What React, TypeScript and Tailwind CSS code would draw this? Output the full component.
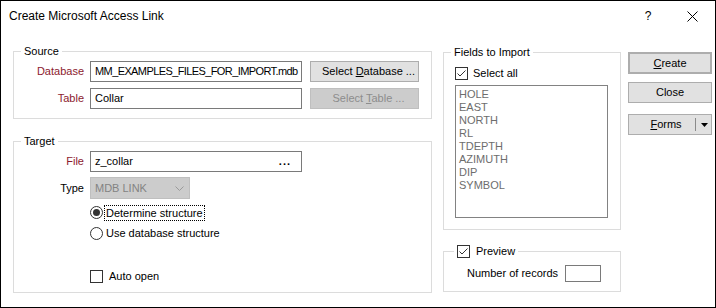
import type { ReactNode } from "react";

const LABEL = "w-[70px] text-right text-[#8c1a2e]";

function GroupBox({
  title,
  className = "",
  legendClass = "ml-[7px]",
  children,
}: {
  title: ReactNode;
  className?: string;
  legendClass?: string;
  children: ReactNode;
}) {
  return (
    <fieldset className={"border border-[#dcdcdc] min-w-0 " + className}>
      <legend className={"px-[3px] leading-[15px] " + legendClass}>{title}</legend>
      {children}
    </fieldset>
  );
}

function CheckBox({ checked }: { checked?: boolean }) {
  return (
    <span className="flex-none w-[13px] h-[13px] border border-[#333] bg-white flex items-center justify-center">
      {checked && (
        <svg width="11" height="11" viewBox="0 0 11 11">
          <path d="M1.5 5.5 L4 8 L9.5 2.5" fill="none" stroke="#333" strokeWidth="1" />
        </svg>
      )}
    </span>
  );
}

function Radio({ checked }: { checked?: boolean }) {
  return (
    <span className="flex-none w-[13px] h-[13px] rounded-full border border-[#333] bg-white flex items-center justify-center">
      {checked && <span className="w-[7px] h-[7px] rounded-full bg-[#333]" />}
    </span>
  );
}

function Button({ children, className = "" }: { children: ReactNode; className?: string }) {
  return (
    <div className={"flex items-center justify-center whitespace-nowrap bg-[#e1e1e1] border border-[#adadad] " + className}>
      {children}
    </div>
  );
}

const FIELDS = ["HOLE", "EAST", "NORTH", "RL", "TDEPTH", "AZIMUTH", "DIP", "SYMBOL"];

export default function App() {
  return (
    <div className="w-[716px] h-[308px] border border-black bg-white text-[11px] leading-[15px] text-black font-['Liberation_Sans',Arial,sans-serif] flex flex-col">
      {/* title bar */}
      <div className="h-[30px] flex items-center pl-[8px] text-[12px]">
        <span className="flex-1">Create Microsoft Access Link</span>
        <span className="w-[10px] text-center mr-[34px]">?</span>
        <svg width="11" height="11" viewBox="0 0 11 11" className="mr-[17px]">
          <path d="M0.5 0.5 L10.5 10.5 M10.5 0.5 L0.5 10.5" stroke="#000" strokeWidth="1" />
        </svg>
      </div>

      <div className="flex pl-[12px] pt-[13px]">
        {/* left column */}
        <div className="w-[419px] flex flex-col">
          <GroupBox title="Source">
            <div className="flex flex-col gap-[6px] pt-[2px] pb-[9px]">
              <div className="flex items-center">
                <span className={LABEL}>Database</span>
                <div className="ml-[6px] w-[212px] h-[21px] border border-[#7a7a7a] px-[4px] flex items-center overflow-hidden whitespace-nowrap tracking-[-0.6px]">
                  MM_EXAMPLES_FILES_FOR_IMPORT.mdb
                </div>
                <Button className="ml-[8px] w-[109px] h-[21px] pl-[8px]">
                  <span>
                    Select <u>D</u>atabase ...
                  </span>
                </Button>
              </div>
              <div className="flex items-center">
                <span className={LABEL}>Table</span>
                <div className="ml-[6px] w-[212px] h-[21px] border border-[#7a7a7a] px-[4px] flex items-center">
                  Collar
                </div>
                <div className="ml-[8px] w-[109px] h-[21px] pl-[8px] flex items-center justify-center whitespace-nowrap bg-[#cccccc] border border-[#bfbfbf] text-[#8d8d8d]">
                  <span>
                    Select <u>T</u>able ...
                  </span>
                </div>
              </div>
            </div>
          </GroupBox>

          <GroupBox title="Target" className="mt-[15px]">
            <div className="flex flex-col pt-[2px] pb-[5px]">
              <div className="flex items-center h-[21px]">
                <span className={LABEL}>File</span>
                <div className="ml-[6px] w-[212px] h-[21px] border border-[#7a7a7a] pl-[4px] pr-[10px] flex items-center justify-between">
                  <span>z_collar</span>
                  <span className="font-bold tracking-[1px]">...</span>
                </div>
              </div>
              <div className="flex items-center h-[22px] mt-[5px]">
                <span className="w-[70px] text-right">Type</span>
                <div className="ml-[6px] w-[100px] h-[22px] border border-[#bfbfbf] bg-[#cccccc] text-[#838383] pl-[4px] pr-[5px] flex items-center justify-between">
                  <span>MDB LINK</span>
                  <svg width="9" height="5" viewBox="0 0 9 5">
                    <path d="M0.5 0.5 L4.5 4.5 L8.5 0.5" fill="none" stroke="#9a9a9a" strokeWidth="1" />
                  </svg>
                </div>
              </div>
              <div className="flex items-center h-[21px] mt-[3px] pl-[76px]">
                <Radio checked />
                <span className="ml-[1px] border border-dotted border-black px-[1px] leading-[14px]">
                  Determine structure
                </span>
              </div>
              <div className="flex items-center h-[21px] pl-[76px]">
                <Radio />
                <span className="ml-[3px]">Use database structure</span>
              </div>
              <div className="flex items-center h-[21px] mt-[22px] pl-[76px]">
                <CheckBox />
                <span className="ml-[6px]">Auto open</span>
              </div>
            </div>
          </GroupBox>
        </div>

        {/* fields column */}
        <div className="w-[178px] ml-[11px] mt-[1px] flex flex-col">
          <GroupBox title="Fields to Import">
            <div className="flex flex-col pl-[11px] pb-[11px]">
              <div className="flex items-center h-[14px] mt-[6px]">
                <CheckBox checked />
                <span className="ml-[5px]">Select all</span>
              </div>
              <div className="mt-[5px] w-[153px] h-[133px] border border-[#828282] pt-[2px] pl-[3px] text-[#6d6d6d] leading-[13px]">
                {FIELDS.map((f) => (
                  <div key={f}>{f}</div>
                ))}
              </div>
            </div>
          </GroupBox>

          <GroupBox
            className="mt-[14px]"
            legendClass="ml-[10px]"
            title={
              <span className="flex items-center">
                <CheckBox checked />
                <span className="ml-[6px]">Preview</span>
              </span>
            }
          >
            <div className="flex items-center h-[17px] mt-[6px] mb-[9px] pl-[23px]">
              <span>Number of records</span>
              <div className="ml-[7px] w-[36px] h-[17px] border border-[#7a7a7a]" />
            </div>
          </GroupBox>
        </div>

        {/* buttons */}
        <div className="w-[84px] ml-[7px] mt-[8px] flex flex-col">
          <Button className="h-[22px] border-2 border-[#0078d7]">
            <span>
              <u>C</u>reate
            </span>
          </Button>
          <Button className="h-[21px] mt-[8px]">Close</Button>
          <Button className="h-[21px] mt-[11px] justify-start">
            <span className="w-[66px] text-center pl-[8px]">
              <u>F</u>orms
            </span>
            <span className="w-px h-[13px] bg-[#8a8a8a]" />
            <svg width="7" height="4" viewBox="0 0 7 4" className="ml-[5px]">
              <path d="M0 0 L7 0 L3.5 4 Z" fill="#000" />
            </svg>
          </Button>
        </div>
      </div>
    </div>
  );
}
